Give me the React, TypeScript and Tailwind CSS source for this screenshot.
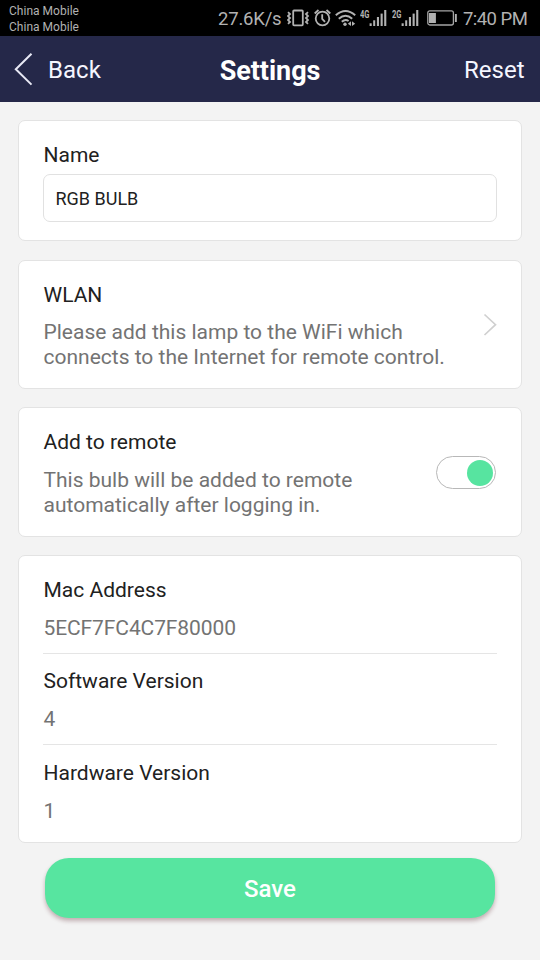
import React from 'react';

function Signal() {
  return (
    <svg width="18" height="17" viewBox="0 0 18 17" fill="#b2b2b2">
      <rect x="0.6" y="13.3" width="2.1" height="2.7" />
      <rect x="4.2" y="10.3" width="2" height="5.7" />
      <rect x="7.9" y="7" width="2.1" height="9" />
      <rect x="11.6" y="3.6" width="2.1" height="12.4" />
      <rect x="15.2" y="0" width="2.1" height="16" />
    </svg>
  );
}

function Network({ label }: { label: string }) {
  return (
    <div className="w-[9px] pt-[9px]">
      <span className="block w-[14px] origin-left scale-x-[0.72] text-[10.5px] font-bold leading-[11px]">{label}</span>
    </div>
  );
}

function StatusBar() {
  return (
    <div className="flex h-9 shrink-0 bg-black text-[#b2b2b2]">
      <div className="w-[218px] pl-[9px] pt-[3px] text-[12px] leading-[16px] tracking-[0.02px]">
        <p>China Mobile</p>
        <p>China Mobile</p>
      </div>
      <div className="w-[69px] whitespace-nowrap text-[18.5px] leading-[38px] tracking-[-0.2px]">27.6K/s</div>
      <svg className="mt-[9px] shrink-0" width="22" height="18" viewBox="0 0 22 18" fill="none" stroke="#b2b2b2">
        <rect x="6.2" y="1.5" width="9.6" height="14.8" rx="0.8" strokeWidth="1.8" />
        <path d="M1 3.2l2 1.8-2 2 2 2-2 2 2 2-2 1.8M21 3.2l-2 1.8 2 2-2 2 2 2-2 2 2 1.8" strokeWidth="1.8" />
      </svg>
      <svg className="ml-[5px] mt-[9px] shrink-0" width="17" height="18" viewBox="0 0 17 18" fill="none" stroke="#b2b2b2" strokeWidth="1.8">
        <circle cx="8.5" cy="9.5" r="6.8" />
        <path d="M8.2 5.3v4.5l2.8 3M0.7 4.5L4.5 1M16.3 4.5L12.5 1" />
      </svg>
      <svg className="ml-[4px] mt-[9px] shrink-0" width="21" height="18" viewBox="0 0 21 18" fill="none" stroke="#b2b2b2" strokeWidth="2">
        <path d="M0.8 6.2Q10.5-2.3 20.2 6.2M3.8 9.7Q10.5 3.7 17.2 9.7M6.8 12.8Q10.3 9.6 13.6 12" />
        <circle cx="10" cy="15.2" r="1.7" fill="#b2b2b2" stroke="none" />
        <path d="M16 12.2v4.8L12.8 14.8zM17 12.2v4.8L20.2 14.8z" fill="#b2b2b2" stroke="none" />
      </svg>
      <div className="w-[4px]" />
      <Network label="4G" />
      <div className="pt-[10px]"><Signal /></div>
      <div className="w-[5px]" />
      <Network label="2G" />
      <div className="pt-[10px]"><Signal /></div>
      <svg className="ml-[8px] mt-[10px] shrink-0" width="31" height="16" viewBox="0 0 31 16">
        <rect x="0.8" y="0.8" width="25.6" height="14.2" rx="2" fill="none" stroke="#a5a5a5" strokeWidth="1.3" />
        <rect x="2" y="3" width="6.9" height="10" fill="#b2b2b2" />
        <rect x="27.9" y="4" width="1.9" height="8" fill="#b2b2b2" />
      </svg>
      <div className="ml-[5px] whitespace-nowrap text-[18.5px] leading-[38px] tracking-[-0.55px]">7:40 PM</div>
    </div>
  );
}

function Header() {
  return (
    <header className="grid h-[66px] shrink-0 grid-cols-3 items-center bg-[#252849] pb-px text-[24px] text-[#f5f6ff]">
      <button className="flex items-center pl-[14px] pt-px text-left">
        <svg width="20" height="34" viewBox="0 0 20 34" fill="none" stroke="#e8e9f5" strokeWidth="2">
          <path d="M17.5 1.8L1.8 17.3l15.7 15.3" />
        </svg>
        <span className="ml-[14px] pt-px tracking-[0.05px]">Back</span>
      </button>
      <h1 className="pt-[5px] text-center text-[27px] font-bold tracking-[-0.05px] text-white">Settings</h1>
      <button className="pr-[15.5px] pt-[2px] text-right tracking-[0px]">Reset</button>
    </header>
  );
}

function Card({ className, children }: { className: string; children: React.ReactNode }) {
  return (
    <section className={'rounded-[7px] border-[1.5px] border-[#e3e3e3] bg-white px-6 ' + className}>{children}</section>
  );
}

function Info({ label, value, last = false }: { label: string; value: string; last?: boolean }) {
  return (
    <div className={last ? 'pt-[15.5px]' : 'border-b border-[#e5e5e5] pb-[12px] pt-[15.5px]'}>
      <h2 className="pl-[0.5px]">{label}</h2>
      <p className="mt-[13px] pl-[0.5px] tracking-[-0.1px] text-[#737373]">{value}</p>
    </div>
  );
}

export default function App() {
  return (
    <div className="flex h-[960px] w-[540px] flex-col overflow-hidden bg-[#f3f3f3] font-['Roboto',sans-serif]">
      <StatusBar />
      <Header />
      <main className="flex flex-col px-[18px] pt-[18px] text-[21px] leading-[25px] text-[#212121]">
        <Card className="h-[121px] pt-[22px]">
          <h2 className="pl-[0.5px]">Name</h2>
          <input
            aria-label="Name"
            className="mt-[6px] block h-[48px] w-full rounded-[7px] border-[1.5px] border-[#e1e1e1] px-[11.5px] text-[18px] outline-none"
            defaultValue="RGB BULB"
          />
        </Card>
        <Card className="mt-[19px] h-[129px] pt-[22px]">
          <h2 className="pl-[0.5px]">WLAN</h2>
          <div className="mt-[12px] flex justify-between pl-[0.5px] text-[#737373]">
            <p>
              Please add this lamp to the WiFi which
              <br />
              connects to the Internet for remote control.
            </p>
            <svg className="-mt-[7px] shrink-0" width="14" height="24" viewBox="0 0 14 24" fill="none" stroke="#d0d0d0" strokeWidth="1.7">
              <path d="M1.5 1.5l11 10.2L1.5 22" />
            </svg>
          </div>
        </Card>
        <Card className="mt-[18px] flex h-[130px] justify-between pt-[22px]">
          <div className="pl-[0.5px]">
            <h2>Add to remote</h2>
            <p className="mt-[13px] text-[#737373]">
              This bulb will be added to remote
              <br />
              automatically after logging in.
            </p>
          </div>
          <button
            role="switch"
            aria-checked="true"
            aria-label="Add to remote"
            className="mr-px mt-[26px] flex h-[33px] w-[60px] items-center justify-end rounded-full border border-[#b8b8b8] bg-white pr-[2px]"
          >
            <span className="size-[26px] rounded-full bg-[#57e4a0]" />
          </button>
        </Card>
        <Card className="mt-[18px] h-[288px] pt-[6px]">
          <Info label="Mac Address" value="5ECF7FC4C7F80000" />
          <Info label="Software Version" value="4" />
          <Info label="Hardware Version" value="1" last />
        </Card>
        <button className="mx-[27px] mt-[15px] h-[60px] rounded-[24px] bg-[#57e5a0] pt-[3px] text-[24px] font-medium text-white shadow-[0_3px_4px_rgba(80,20,30,0.3)]">
          Save
        </button>
      </main>
    </div>
  );
}
